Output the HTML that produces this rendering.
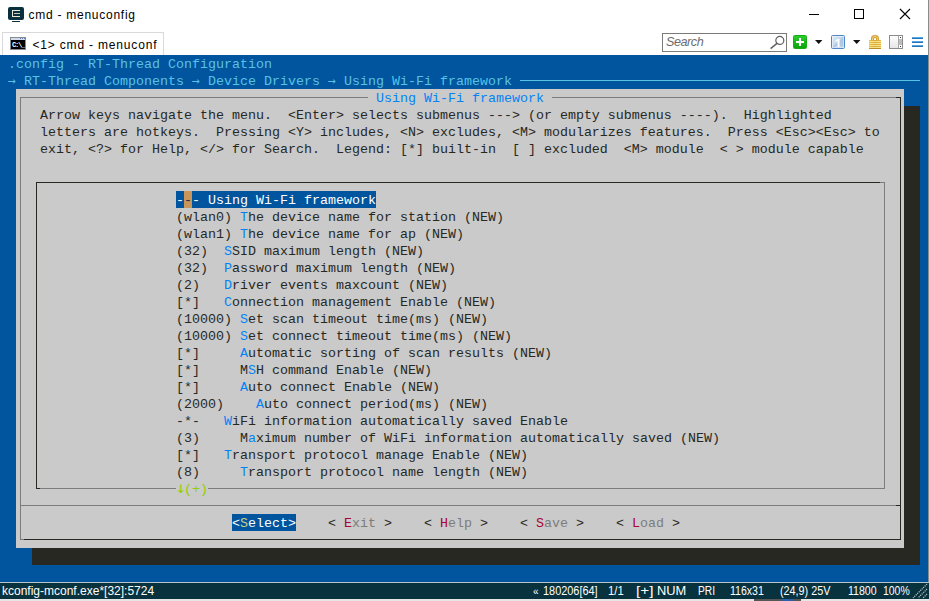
<!DOCTYPE html>
<html lang="en">
<head>
<meta charset="utf-8">
<title>cmd - menuconfig</title>
<style>
html,body{margin:0;padding:0;}
body{width:929px;height:601px;overflow:hidden;background:#fff;position:relative;font-family:"Liberation Sans",sans-serif;}
.abs{position:absolute;}
#win{position:absolute;left:0;top:0;width:929px;height:601px;overflow:hidden;background:#fff;}
/* title bar */
#title{position:absolute;left:28.5px;top:7px;font-size:12px;line-height:16px;color:#000;white-space:pre;letter-spacing:0.74px;}
#tab{position:absolute;left:2px;top:32px;width:162px;height:23px;border:1px solid #d9d9d9;border-bottom:none;background:#fff;box-sizing:border-box;}
#tabtxt{position:absolute;left:32.5px;top:37px;font-size:12px;line-height:16px;color:#000;white-space:pre;letter-spacing:0.82px;}
#search{position:absolute;left:662px;top:33px;width:125px;height:19px;border:1px solid #7a7a7a;box-sizing:border-box;background:#fff;}
#searchtxt{position:absolute;left:666px;top:35px;font-size:12.6px;letter-spacing:-0.45px;line-height:15px;color:#6d6d6d;font-style:italic;white-space:pre;}
/* terminal */
#term{position:absolute;left:0;top:55px;width:928px;height:527px;background:#01549e;overflow:hidden;
  font-family:"Liberation Mono","DejaVu Sans Mono",monospace;font-size:13.33px;line-height:17px;color:#272822;}
#term span{position:absolute;white-space:pre;height:17px;line-height:19px;overflow:hidden;}
#term i{font-style:normal;color:#0383f5;}
.cy{color:#58c2e5;}
.ln{position:absolute;background:#7c7c7c;}
.lk{position:absolute;background:#272822;}
#dlg{position:absolute;left:16px;top:34px;width:888px;height:459px;background:#cacaca;}
#shb{position:absolute;left:32px;top:493px;width:888px;height:17px;background:#272822;}
#shr{position:absolute;left:904px;top:51px;width:16px;height:459px;background:#272822;}
.sel{background:#01549e;color:#fff;}
.gr{color:#7c7c7c;}
#term em{font-style:normal;color:#1c3050;}
#term u{text-decoration:none;color:#cccc81;}
#term s{text-decoration:none;color:#7c7c7c;}
#term .ar{font-family:"DejaVu Sans Mono","Liberation Mono",monospace;font-size:13.28px;}
#term b{font-weight:normal;color:#a70334;}
/* status */
#status{position:absolute;left:0;top:582px;width:929px;height:17px;background:#08323e;border-top:1px solid #b8c4c8;box-sizing:border-box;
  font-size:12px;color:#fff;}
#status span{position:absolute;top:1px;line-height:15px;white-space:pre;transform-origin:0 50%;}
</style>
</head>
<body>
<div id="win">

<!-- TITLEBAR -->
<div class="abs" style="left:8px;top:7px;width:16px;height:13px;background:#08303e;border-radius:2px"></div>
<div class="abs" style="left:12px;top:21px;width:8px;height:1px;background:#08303e"></div>
<div class="abs" style="left:12px;top:10px;width:8px;height:7px;box-sizing:border-box;border:1px solid #ece8d6;border-right:none"></div>
<div class="abs" style="left:14px;top:13px;width:6px;height:1px;background:#c9c9b8"></div>
<div id="title">cmd - menuconfig</div>
<!-- window buttons -->
<div class="abs" style="left:809px;top:14px;width:10px;height:1px;background:#000"></div>
<div class="abs" style="left:854px;top:9px;width:10px;height:10px;box-sizing:border-box;border:1px solid #000"></div>
<svg class="abs" style="left:899px;top:8px" width="12" height="12" viewBox="0 0 12 12"><path d="M1 1 L11 11 M11 1 L1 11" stroke="#000" stroke-width="1.1" fill="none"/></svg>
<div class="abs" style="left:928px;top:0;width:1px;height:601px;background:#8a8a8a"></div>
<!-- tab -->
<div id="tab"></div>
<div class="abs" style="left:10px;top:37px;width:16px;height:13px;background:#868c96"></div>
<div class="abs" style="left:11px;top:38px;width:14px;height:2px;background:#d3dbe9"></div>
<div class="abs" style="left:20px;top:38px;width:1px;height:1px;background:#5b7fc0;box-shadow:2px 0 0 #5b7fc0,4px 0 0 #5b7fc0"></div>
<div class="abs" style="left:11px;top:40px;width:14px;height:9px;background:#000"></div>
<div class="abs" style="left:12px;top:41px;width:13px;height:8px;overflow:hidden;color:#fff;font:bold 7px/8px 'Liberation Mono',monospace;letter-spacing:-1.2px;white-space:pre">C:\_</div>
<div id="tabtxt">&lt;1&gt; cmd - menuconf</div>
<!-- search -->
<div id="search"></div>
<div id="searchtxt">Search</div>
<svg class="abs" style="left:768px;top:34px" width="18" height="17" viewBox="0 0 18 17"><circle cx="11.8" cy="6.4" r="4" fill="none" stroke="#606060" stroke-width="1.2"/><path d="M9 9.4 L2.6 14.6" stroke="#606060" stroke-width="1.4" fill="none"/></svg>
<!-- toolbar icons -->
<div class="abs" style="left:793px;top:35px;width:14px;height:14px;box-sizing:border-box;border:1px solid #14ac14;border-radius:1.5px;background:linear-gradient(#2ecb2e,#08a608)"></div>
<div class="abs" style="left:796px;top:41px;width:8px;height:2px;background:#fff"></div>
<div class="abs" style="left:799px;top:38px;width:2px;height:8px;background:#fff"></div>
<svg class="abs" style="left:815px;top:40px" width="8" height="5" viewBox="0 0 8 5"><path d="M0 0 H7.4 L3.7 4 Z" fill="#111"/></svg>
<div class="abs" style="left:831px;top:35px;width:14px;height:14px;box-sizing:border-box;border:1px solid #4f86c6;border-radius:1.5px;background:linear-gradient(135deg,#dbe7f4 0%,#c4d8ee 49%,#a9c6e6 51%,#b4cdea 100%);box-shadow:inset 0 0 0 1px rgba(255,255,255,.45)"></div>
<div class="abs" style="left:833px;top:37px;width:10px;height:10px;overflow:hidden;color:#fff;font:bold 13px/13px 'Liberation Sans',sans-serif;text-align:center">1</div>
<svg class="abs" style="left:853px;top:40px" width="8" height="5" viewBox="0 0 8 5"><path d="M0 0 H7.4 L3.7 4 Z" fill="#111"/></svg>
<svg class="abs" style="left:868px;top:34px" width="14" height="16" viewBox="0 0 14 16"><defs><linearGradient id="lg" x1="0" x2="1" y1="0" y2="0"><stop offset="0" stop-color="#e9c24f"/><stop offset=".5" stop-color="#d9a836"/><stop offset="1" stop-color="#e6bb45"/></linearGradient></defs><path d="M4.5 7 V4.4 Q4.5 2.5 7 2.5 Q9.5 2.5 9.5 4.4 V7" fill="none" stroke="#cf9f34" stroke-width="3"/><path d="M4.5 7 V4.4 Q4.5 2.5 7 2.5 Q9.5 2.5 9.5 4.4 V7" fill="none" stroke="#f1d57a" stroke-width="1"/><rect x="1" y="6" width="12" height="9" fill="url(#lg)"/><path d="M1 7.5 H13 M1 9.5 H13 M1 11.5 H13 M1 13.5 H13" stroke="#f5e08c" stroke-width="1"/><path d="M1 14.5 H13" stroke="#b98a28" stroke-width="1"/></svg>
<div class="abs" style="left:889px;top:35px;width:14px;height:14px;box-sizing:border-box;border:1px solid #8c8c8c;background:linear-gradient(#fff,#e6e6e6)"></div>
<div class="abs" style="left:898px;top:36px;width:4px;height:12px;background:#bdbdbd;border-left:1px solid #a8a8a8;box-sizing:border-box"></div>
<div class="abs" style="left:899px;top:36px;width:3px;height:3px;background:#fff"></div>
<div class="abs" style="left:899px;top:45px;width:3px;height:3px;background:#fff"></div>
<div class="abs" style="left:900px;top:37px;width:1px;height:1px;background:#333"></div>
<div class="abs" style="left:900px;top:46px;width:1px;height:1px;background:#333"></div>
<div class="abs" style="left:912px;top:37px;width:11px;height:2px;background:linear-gradient(#6fc0f0,#0a5ab0)"></div>
<div class="abs" style="left:912px;top:41px;width:11px;height:2px;background:linear-gradient(#6fc0f0,#0a5ab0)"></div>
<div class="abs" style="left:912px;top:45px;width:11px;height:2px;background:linear-gradient(#6fc0f0,#0a5ab0)"></div>

<!-- TERMINAL -->
<div id="term">
<span class="cy" style="left:8px;top:0">.config - RT-Thread Configuration</span>
<span class="cy" style="left:8px;top:17px">  RT-Thread Components   Device Drivers   Using Wi-Fi framework</span>
<span class="cy ar" style="left:8px;top:16px">→</span><span class="cy ar" style="left:192px;top:16px">→</span><span class="cy ar" style="left:328px;top:16px">→</span>
<div class="abs" style="left:520px;top:25px;width:400px;height:1px;background:#58c2e5"></div>
<div id="shr"></div><div id="shb"></div>
<div id="dlg"></div>
<div class="ln" style="left:20px;top:42px;width:348px;height:1px"></div>
<div class="ln" style="left:552px;top:42px;width:344px;height:1px"></div>
<div class="lk" style="left:896px;top:42px;width:5px;height:1px"></div>
<div class="ln" style="left:20px;top:42px;width:1px;height:442px"></div>
<div class="lk" style="left:900px;top:42px;width:1px;height:443px"></div>
<div class="lk" style="left:24px;top:484px;width:877px;height:1px"></div>
<div class="ln" style="left:20px;top:484px;width:4px;height:1px"></div>
<span style="left:376px;top:34px;color:#0383f5">Using Wi-Fi framework</span>
<span style="left:40px;top:51px">Arrow keys navigate the menu.  &lt;Enter&gt; selects submenus ---&gt; (or empty submenus ----).  Highlighted</span>
<span style="left:40px;top:68px">letters are hotkeys.  Pressing &lt;Y&gt; includes, &lt;N&gt; excludes, &lt;M&gt; modularizes features.  Press &lt;Esc&gt;&lt;Esc&gt; to</span>
<span style="left:40px;top:85px">exit, &lt;?&gt; for Help, &lt;/&gt; for Search.  Legend: [*] built-in  [ ] excluded  &lt;M&gt; module  &lt; &gt; module capable</span>
<div class="lk" style="left:36px;top:127px;width:845px;height:1px"></div>
<div class="ln" style="left:880px;top:127px;width:5px;height:1px"></div>
<div class="lk" style="left:36px;top:127px;width:1px;height:306px"></div>
<div class="ln" style="left:884px;top:127px;width:1px;height:307px"></div>
<div class="ln" style="left:40px;top:433px;width:136px;height:1px"></div>
<div class="lk" style="left:36px;top:433px;width:4px;height:1px"></div>
<div class="ln" style="left:208px;top:433px;width:677px;height:1px"></div>
<span style="left:176px;top:425px;color:#8dd006"> (+)</span>
<span class="ar" style="left:176px;top:423px;color:#8dd006;font-size:16px">↓</span>
<div class="abs" style="left:176px;top:136px;width:200px;height:17px;background:#01549e"></div>
<div class="abs" style="left:184px;top:136px;width:8px;height:17px;background:#c8965a"></div>
<span style="left:176px;top:136px;color:#fff">-<em>-</em>- Using Wi-Fi framework</span>
<span style="left:176px;top:153px">(wlan0) <i>T</i>he device name for station (NEW)</span>
<span style="left:176px;top:170px">(wlan1) <i>T</i>he device name for ap (NEW)</span>
<span style="left:176px;top:187px">(32)  <i>S</i>SID maximum length (NEW)</span>
<span style="left:176px;top:204px">(32)  <i>P</i>assword maximum length (NEW)</span>
<span style="left:176px;top:221px">(2)   <i>D</i>river events maxcount (NEW)</span>
<span style="left:176px;top:238px">[*]   <i>C</i>onnection management Enable (NEW)</span>
<span style="left:176px;top:255px">(10000) <i>S</i>et scan timeout time(ms) (NEW)</span>
<span style="left:176px;top:272px">(10000) <i>S</i>et connect timeout time(ms) (NEW)</span>
<span style="left:176px;top:289px">[*]     <i>A</i>utomatic sorting of scan results (NEW)</span>
<span style="left:176px;top:306px">[*]     M<i>S</i>H command Enable (NEW)</span>
<span style="left:176px;top:323px">[*]     <i>A</i>uto connect Enable (NEW)</span>
<span style="left:176px;top:340px">(2000)    <i>A</i>uto connect period(ms) (NEW)</span>
<span style="left:176px;top:357px">-*-   <i>W</i>iFi information automatically saved Enable</span>
<span style="left:176px;top:374px">(3)     M<i>a</i>ximum number of WiFi information automatically saved (NEW)</span>
<span style="left:176px;top:391px">[*]   <i>T</i>ransport protocol manage Enable (NEW)</span>
<span style="left:176px;top:408px">(8)     <i>T</i>ransport protocol name length (NEW)</span>
<div class="ln" style="left:20px;top:450px;width:876px;height:1px"></div>
<div class="lk" style="left:896px;top:450px;width:5px;height:1px"></div>
<span class="sel" style="left:232px;top:459px">&lt;<u>S</u>elect&gt;</span>
<span style="left:328px;top:459px">&lt; <b>E</b><s>xit</s> &gt;</span>
<span style="left:424px;top:459px">&lt; <b>H</b><s>elp</s> &gt;</span>
<span style="left:520px;top:459px">&lt; <b>S</b><s>ave</s> &gt;</span>
<span style="left:616px;top:459px">&lt; <b>L</b><s>oad</s> &gt;</span>
</div>

<!-- STATUS -->
<div id="status">
<span style="left:2px">kconfig-mconf.exe*[32]:5724</span>
<span style="left:533px;font-size:10px">«</span>
<span style="left:543px;transform:scaleX(.91)">180206[64]</span>
<span style="left:608px;transform:scaleX(.94)">1/1</span>
<span style="left:636px;transform:scaleX(1.28)">[+]</span>
<span style="left:656.5px;transform:scaleX(1.07)">NUM</span>
<span style="left:698px;transform:scaleX(.85)">PRI</span>
<span style="left:730px;transform:scaleX(.88)">116x31</span>
<span style="left:780px;transform:scaleX(.9)">(24,9) 25V</span>
<span style="left:848px;transform:scaleX(.88)">11800</span>
<span style="left:883px;transform:scaleX(.87)">100%</span>
<svg class="abs" style="left:911px;top:0" width="17" height="16" viewBox="0 0 17 16"><path d="M16 1 L2 15 M16 6 L7 15 M16 11 L12 15" stroke="#b4c0c4" stroke-width="1.2" stroke-dasharray="1.2 0.9" fill="none"/></svg>
</div>
<div class="abs" style="left:0;top:599px;width:929px;height:2px;background:#e6e6e6"></div>
<div class="abs" style="left:754px;top:599px;width:47px;height:2px;background:#555"></div>
<div class="abs" style="left:782px;top:599px;width:11px;height:2px;background:#2a60a8"></div>

</div>
</body>
</html>
